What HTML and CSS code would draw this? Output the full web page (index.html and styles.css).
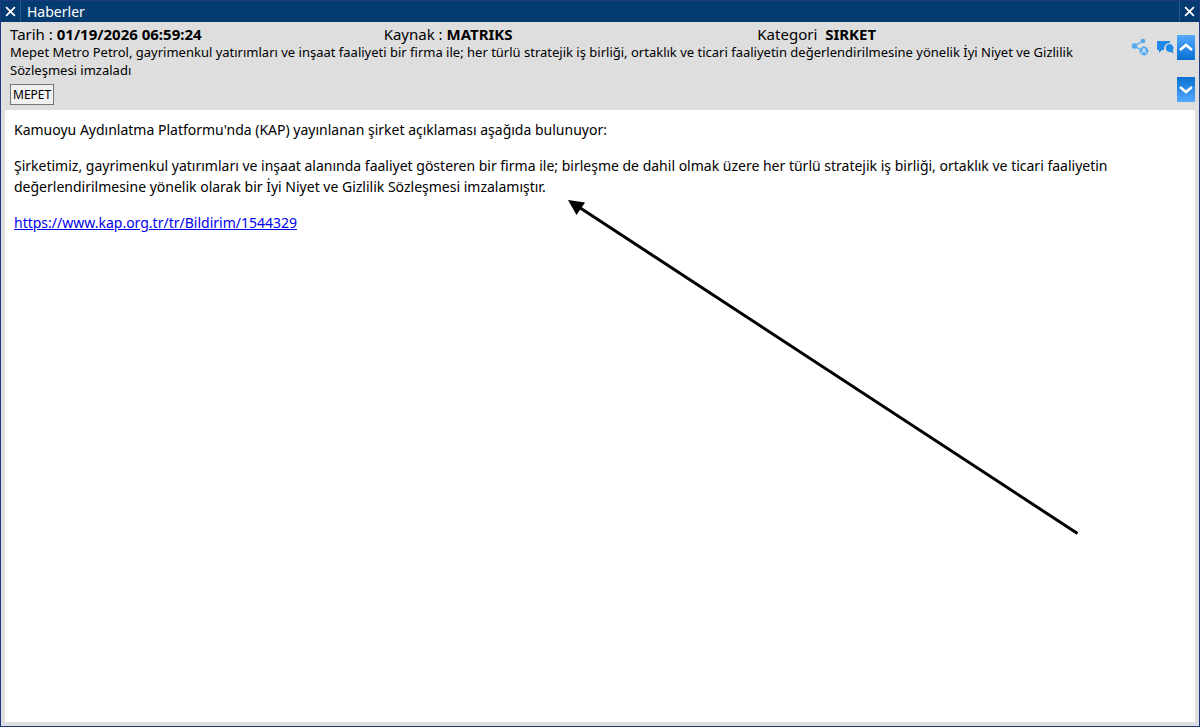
FILE: index.html
```html
<!DOCTYPE html>
<html lang="tr">
<head>
<meta charset="utf-8">
<title>Haberler</title>
<link rel="stylesheet" href="styles.css">
</head>
<body>
<main class="window">
  <header class="titlebar">
    <button class="close close-left" aria-label="Kapat">
      <svg viewBox="0 0 10 10"><path d="M1 1l8 8M9 1l-8 8"/></svg>
    </button>
    <h1 class="title">Haberler</h1>
    <button class="close close-right" aria-label="Pencereyi kapat">
      <svg viewBox="0 0 10 10"><path d="M1 1l8 8M9 1l-8 8"/></svg>
    </button>
  </header>
  <section class="summary">
    <div class="info">
      <div class="meta">
        <div>Tarih : <b>01/19/2026 06:59:24</b></div>
        <div>Kaynak : <b>MATRIKS</b></div>
        <div>Kategori <b class="category">SIRKET</b></div>
      </div>
      <h2 class="headline">Mepet Metro Petrol, gayrimenkul yatırımları ve inşaat faaliyeti bir firma ile; her türlü stratejik iş birliği, ortaklık ve ticari faaliyetin değerlendirilmesine yönelik İyi Niyet ve Gizlilik Sözleşmesi imzaladı</h2>
      <button class="symbol">MEPET</button>
    </div>
    <div class="tools">
      <button class="tool" aria-label="Paylaş">
        <svg viewBox="0 0 18 18" fill="#55a9ee">
          <path d="M3 8L12 3M3 8l9 5" stroke="#6db5ee" stroke-width="1.500" fill="none"/>
          <circle cx="3.500" cy="8" r="2.800"/><circle cx="12" cy="3" r="2.300"/><circle cx="13" cy="13" r="4.400"/>
          <circle cx="13" cy="12" r="1.300" fill="none" stroke="#e4eff8"/>
          <path d="M10.500 15.500q.5-2 2.500-2t2.500 2" fill="none" stroke="#e4eff8"/>
        </svg>
      </button>
      <button class="tool" aria-label="Yorumlar">
        <svg viewBox="0 0 18 18" fill="#218ae8">
          <path d="M1 3h13v2q-6 0-6 7H6l-3 3v-3H1z"/>
          <path d="M13.500 6a4 4 0 0 1 3.200 6.400l.8 3-3-1.400A4 4 0 1 1 13.500 6z"/>
        </svg>
      </button>
    </div>
    <div class="nav">
      <button class="arrow up" aria-label="Önceki haber"><svg viewBox="0 0 18 25"><path d="M3 15l6-5 6 5"/></svg></button>
      <button class="arrow down" aria-label="Sonraki haber"><svg viewBox="0 0 18 25"><path d="M3 10l6 5 6-5"/></svg></button>
    </div>
  </section>
  <article class="content">
    <p>Kamuoyu Aydınlatma Platformu'nda (KAP) yayınlanan şirket açıklaması aşağıda bulunuyor:</p>
    <p>Şirketimiz, gayrimenkul yatırımları ve inşaat alanında faaliyet gösteren bir firma ile; birleşme de dahil olmak üzere her türlü stratejik iş birliği, ortaklık ve ticari faaliyetin değerlendirilmesine yönelik olarak bir İyi Niyet ve Gizlilik Sözleşmesi imzalamıştır.</p>
    <p><a href="https://www.kap.org.tr/tr/Bildirim/1544329">https://www.kap.org.tr/tr/Bildirim/1544329</a></p>
    <svg class="pointer" viewBox="0 0 510 335" aria-hidden="true">
      <path d="M10 6.500L509.500 333.500" stroke="#000" stroke-width="3"/>
      <path d="M0 0L17 2.500 8.500 15z"/>
    </svg>
  </article>
</main>
</body>
</html>
```
FILE: styles.css
```css
* { box-sizing: border-box; }
body {
  margin: 0;
  font-family: "Noto Sans", "Open Sans", sans-serif;
  color: #000;
}
h1, h2, p { margin: 0; font-weight: 400; }
button { padding: 0; border: 0; background: none; font: inherit; color: inherit; }
svg { display: block; }

.window {
  display: flex;
  flex-direction: column;
  min-height: 100vh;
  border: 1px solid #1d3a7c;
  background: #dedede;
}
.titlebar {
  display: flex;
  height: 21px;
  background: #043b70;
  color: #fff;
}
.title { flex: 1; padding-left: 6px; font-size: 14px; line-height: 21px; }
.close { display: grid; place-items: center; width: 20px; }
.close svg { width: 11px; height: 11px; stroke: #fff; stroke-width: 1.600; fill: none; }
.close-left { border-right: 1px solid #2c5b8a; }
.close-right { border-left: 1px solid #2c5b8a; }

.summary { display: flex; padding: 3px 4px 5px 9px; }
.info { flex: 1; }
.meta {
  display: grid;
  grid-template-columns: 1fr 1fr 1fr;
  font-size: 15px;
  line-height: 18px;
}
.category { margin-left: 4px; }
.headline { font-size: 13px; line-height: 18px; }
.symbol {
  height: 21px;
  margin-top: 5px;
  padding: 0 2px;
  border: 1px solid #777;
  background: #f0f0f0;
  font-size: 12px;
  line-height: 18px;
}
.tools { display: flex; gap: 7px; padding: 13px 3px 0 0; }
.tool { width: 18px; height: 18px; }
.nav { display: flex; flex-direction: column; gap: 17px; padding-top: 10px; }
.arrow { width: 18px; height: 25px; }
.arrow svg { stroke: #fff; stroke-width: 2.500; fill: none; }
.up { background: linear-gradient(#55a9ff, #0870d0); }
.down { background: linear-gradient(#0870d0, #55a9ff); }

.content {
  position: relative;
  flex: 1;
  display: flex;
  flex-direction: column;
  gap: 15px;
  margin: 0 4px 4px;
  padding: 9px 40px 9px 9px;
  background: #fff;
  font-size: 14px;
  line-height: 21px;
}
.content a { color: #00e; }
.pointer {
  position: absolute;
  left: 563px;
  top: 90px;
  width: 510px;
  height: 335px;
}
```
